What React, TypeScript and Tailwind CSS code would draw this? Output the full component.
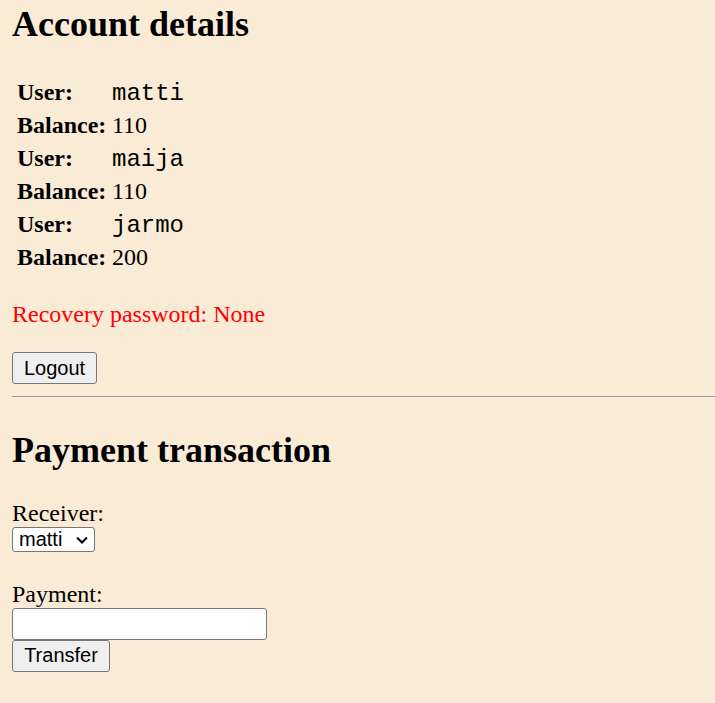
import React from "react";

const users = [
    { name: "matti", balance: 110 },
    { name: "maija", balance: 110 },
    { name: "jarmo", balance: 200 },
];

export default function App() {
    return (
        <div className="min-h-[703px] bg-[#faebd7] px-[12px] text-black text-[24px] font-['Liberation_Serif',serif]">
            <h2 className="pt-[4px] text-[36px] leading-[41px] font-bold">Account details</h2>

            <div className="mt-[31px] flex flex-col pl-[5px]">
                {users.map((u) => (
                    <React.Fragment key={u.name}>
                        <div className="flex h-[33px] items-baseline leading-[33px]">
                            <span className="w-[95px] font-bold">User:</span>
                            <span className="font-['Liberation_Mono',monospace] font-light">{u.name}</span>
                        </div>
                        <div className="flex h-[33px] items-baseline leading-[33px]">
                            <span className="w-[95px] font-bold">Balance:</span>
                            <span>{u.balance}</span>
                        </div>
                    </React.Fragment>
                ))}
            </div>

            <p className="mt-[26px] leading-[28px] text-[#ff0000]">Recovery password: None</p>

            <button className="mt-[24px] h-[32px] w-[85px] rounded-[3px] border border-[#767676] bg-[#efefef] pb-[1px] text-[20px] leading-[28px] font-['Liberation_Sans',sans-serif]">
                Logout
            </button>

            <hr className="mt-[11px] -mr-[12px] border-t border-[#9a9a9a]" />

            <h2 className="mt-[33px] text-[36px] leading-[41px] font-bold">Payment transaction</h2>

            <div className="mt-[28px] leading-[28px]">Receiver:</div>
            <div className="relative w-[83px]">
                <select className="block h-[25px] w-[83px] appearance-none rounded-[3px] border border-[#767676] bg-white pl-[6px] text-[20px] leading-[22px] font-['Liberation_Sans',sans-serif]">
                    <option>matti</option>
                    <option>maija</option>
                    <option>jarmo</option>
                </select>
                <svg
                    className="pointer-events-none absolute right-[7px] top-[9px]"
                    width="12"
                    height="8"
                    viewBox="0 0 12 8"
                    fill="none"
                    stroke="black"
                    strokeWidth="2"
                >
                    <path d="M1 1.5 L6 6.5 L11 1.5" />
                </svg>
            </div>

            <div className="mt-[28px] leading-[28px]">Payment:</div>
            <input type="text" className="block h-[32px] w-[255px] rounded-[3px] border border-[#767676] bg-white text-[20px]" />
            <button className="block h-[32px] w-[98px] rounded-[3px] border border-[#767676] bg-[#efefef] pb-[1px] text-[20px] leading-[28px] font-['Liberation_Sans',sans-serif]">
                Transfer
            </button>
        </div>
    );
}
